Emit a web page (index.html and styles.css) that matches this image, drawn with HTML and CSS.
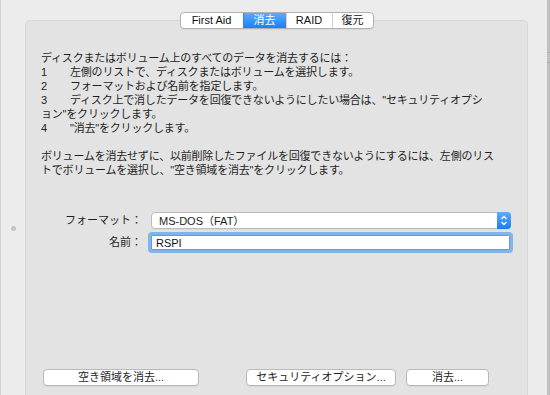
FILE: index.html
```html
<!DOCTYPE html>
<html lang="ja">
<head>
    <meta charset="utf-8">
    <meta name="viewport" content="width=device-width">
    <title>ディスクユーティリティ - 消去</title>
    <link rel="stylesheet" href="styles.css">
</head>

<body>
    <div class="window">
        <div class="gutter">
            <span class="gutter__dot"></span>
        </div>

        <div class="main">
            <div class="tabs">
                <div class="tabs__item tabs__item--aid">First Aid</div>
                <div class="tabs__item tabs__item--erase is-active">消去</div>
                <div class="tabs__item tabs__item--raid">RAID</div>
                <div class="tabs__item tabs__item--restore">復元</div>
            </div>

            <div class="panel">
                <div class="help">
                    <div class="help__line">ディスクまたはボリューム上のすべてのデータを消去するには：</div>
                    <div class="help__line"><span class="help__num">1</span>左側のリストで、ディスクまたはボリュームを選択します。</div>
                    <div class="help__line"><span class="help__num">2</span>フォーマットおよび名前を指定します。</div>
                    <div class="help__line"><span class="help__num">3</span>ディスク上で消したデータを回復できないようにしたい場合は、"セキュリティオプシ</div>
                    <div class="help__line">ョン"をクリックします。</div>
                    <div class="help__line"><span class="help__num">4</span>"消去"をクリックします。</div>
                    <div class="help__line"></div>
                    <div class="help__line">ボリュームを消去せずに、以前削除したファイルを回復できないようにするには、左側のリス</div>
                    <div class="help__line">トでボリュームを選択し、"空き領域を消去"をクリックします。</div>
                </div>

                <div class="form">
                    <label class="form__label">フォーマット：</label>
                    <div class="form__control">
                        <div class="popup">
                            <span class="popup__value">MS-DOS（FAT）</span>
                            <span class="popup__stepper">
                                <svg width="14" height="17" viewBox="0 0 14 17">
                                    <path d="M4.5 7 L7 4.5 L9.5 7" fill="none" stroke="#fff" stroke-width="1.3"/>
                                    <path d="M4.5 10 L7 12.5 L9.5 10" fill="none" stroke="#fff" stroke-width="1.3"/>
                                </svg>
                            </span>
                        </div>
                    </div>

                    <label class="form__label" for="name">名前：</label>
                    <div class="form__control">
                        <input class="field" id="name" type="text" value="RSPI">
                    </div>
                </div>

                <div class="actions">
                    <button class="btn btn--free">空き領域を消去...</button>
                    <div class="actions__right">
                        <button class="btn btn--security">セキュリティオプション...</button>
                        <button class="btn btn--erase">消去...</button>
                    </div>
                </div>
            </div>
        </div>

        <div class="edge">
            <span class="edge__grip"></span>
        </div>
    </div>
</body>
</html>
```

FILE: styles.css
```css
* {
    box-sizing: border-box;
}

html, body {
    margin: 0;
    padding: 0;
}

body {
    background: #ececec;
    color: #1e1e1e;
    font: 11px/14px "Liberation Sans", "Noto Sans CJK JP", sans-serif;
}

.window {
    display: flex;
    width: 550px;
    height: 395px;
    overflow: hidden;
}

/* left split gutter */
.gutter {
    width: 25px;
    border-left: 1px solid #d3d3d3;
    display: flex;
    flex-direction: column;
    align-items: center;
    padding-top: 226px;
}

.gutter__dot {
    width: 5px;
    height: 5px;
    border-radius: 50%;
    background: #c4c4c4;
}

.main {
    width: 503px;
    margin-right: 19px;
    display: flex;
    flex-direction: column;
    padding-top: 12px;
}

/* segmented tabs */
.tabs {
    align-self: center;
    display: flex;
    position: relative;
    z-index: 1;
    background: #fff;
    border: 1px solid #b1b1b1;
    border-radius: 4px;
    overflow: hidden;
    box-shadow: 0 1px 1px rgba(0, 0, 0, 0.06);
}

.tabs__item {
    height: 15px;
    line-height: 15px;
    text-align: center;
    color: #111;
    border-left: 1px solid #d2d2d2;
}

.tabs__item:first-child {
    border-left: none;
}

.tabs__item--aid {
    width: 62px;
}

.tabs__item--erase {
    width: 43px;
}

.tabs__item--raid {
    width: 46px;
}

.tabs__item--restore {
    width: 41px;
}

.tabs__item.is-active {
    color: #fff;
    background: linear-gradient(#5babfd, #1c7ff5);
    border-left-color: #2a86f3;
}

.panel {
    flex: 1;
    margin-top: -9px;
    background: #e3e3e3;
    border: 1px solid #d7d7d7;
    border-bottom: none;
    border-radius: 5px 5px 0 0;
    padding: 30px 14px 0 15px;
}

.help__line {
    height: 14px;
    white-space: nowrap;
    letter-spacing: -0.2px;
}

.help__num {
    display: inline-block;
    width: 29px;
}

/* format / name form */
.form {
    display: grid;
    grid-template-columns: 103px 365px;
    grid-auto-rows: 21px;
    column-gap: 4px;
    row-gap: 1px;
    margin-top: 33px;
}

.form__label {
    text-align: right;
    line-height: 21px;
    padding-right: 2px;
}

.form__control {
    display: flex;
    align-items: center;
}

.popup {
    display: flex;
    align-items: center;
    width: 360px;
    height: 17px;
    margin-left: 3px;
    background: #fff;
    border: 1px solid #bcbcbc;
    border-radius: 4px;
    box-shadow: 0 1px 0 rgba(0, 0, 0, 0.04);
}

.popup__value {
    flex: 1;
    padding-left: 7px;
}

.popup__stepper {
    display: flex;
    width: 14px;
    height: 17px;
    margin: -1px -1px -1px 0;
    background: linear-gradient(#5eacfe, #1a7cf4);
    border-radius: 0 4px 4px 0;
}

.field {
    width: 365px;
    height: 21px;
    margin: 0;
    padding: 0 0 0 5px;
    font: inherit;
    color: #111;
    background: #fff;
    border: 3px solid #80b5ec;
    border-radius: 4px;
    box-shadow: inset 0 0 0 1px #5d9de2;
    outline: none;
}

/* bottom buttons */
.actions {
    display: flex;
    margin-top: 116px;
    padding: 0 24px 0 2px;
}

.actions__right {
    display: flex;
    gap: 10px;
    margin-left: auto;
}

.btn {
    height: 17px;
    margin: 0;
    padding: 0;
    font: inherit;
    line-height: 15px;
    color: #1e1e1e;
    background: #fff;
    border: 1px solid #b9b9b9;
    border-radius: 4px;
    box-shadow: 0 1px 0 rgba(0, 0, 0, 0.05);
}

.btn--free {
    width: 156px;
}

.btn--security {
    width: 150px;
}

.btn--erase {
    width: 83px;
}

/* right window edge */
.edge {
    width: 3px;
    background: #c1c1c1;
    padding-top: 52px;
}

.edge__grip {
    display: block;
    height: 11px;
    border-top: 1px solid #a8a8a8;
    border-bottom: 1px solid #a8a8a8;
}
```
